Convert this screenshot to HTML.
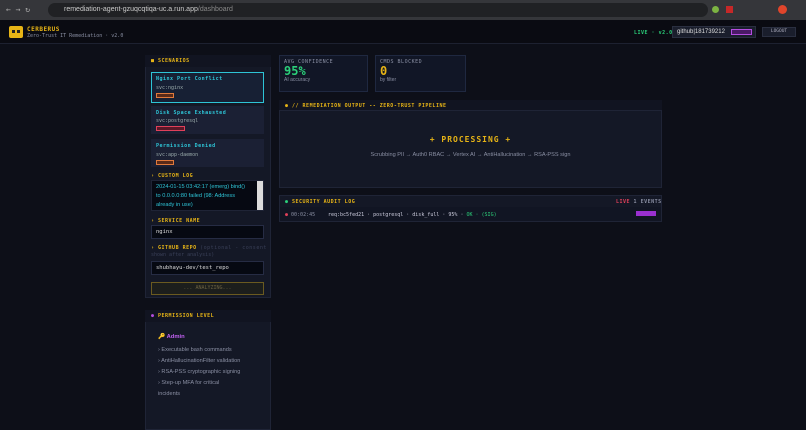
<!DOCTYPE html>
<html><head><meta charset="utf-8"><style>
*{margin:0;padding:0;box-sizing:border-box}
body{width:806px;height:423px;overflow:hidden;background:#0d0f18;font-family:"DejaVu Sans Mono","Liberation Mono",monospace;color:#cfd3e0;position:relative}
.a{position:absolute}
.s{font-family:"Liberation Sans",sans-serif}
.chrome{left:0;top:0;width:806px;height:20px;background:#35363a}
.url{left:48px;top:3px;width:660px;height:14px;border-radius:7px;background:#202124;color:#ccc;font:7px "Liberation Sans",sans-serif;line-height:14px;padding-left:16px}
.hdr{left:0;top:20px;width:806px;height:24px;background:#0a0b12;border-bottom:1px solid #1d2130}
.panel{background:#141826;border:1px solid #1f2436}
.t{font-size:5px;letter-spacing:.5px;font-weight:bold}
.card{border:1px solid #1f2840;background:#111626;padding:3px 4px}
</style></head><body>
<div class="a chrome"></div>
<div class="a" style="left:6px;top:5px;color:#aaa;font-size:8px">← → ↻</div>
<div class="a url">remediation-agent-gzuqcqtiqa-uc.a.run.app<span style="color:#888">/dashboard</span></div>
<div class="a" style="left:712px;top:6px;width:7px;height:7px;border-radius:50%;background:#7cb342"></div>
<div class="a" style="left:726px;top:6px;width:7px;height:7px;background:#c62828"></div>
<div class="a" style="left:778px;top:5px;width:9px;height:9px;border-radius:50%;background:#e0452b"></div>
<div class="a hdr"></div>
<div class="a" style="left:9px;top:26px;width:14px;height:12px;background:#e7b416;border-radius:2px"><div style="margin:4px 3px;width:8px;height:3px;border-left:3px solid #222;border-right:3px solid #222"></div></div>
<div class="a t" style="left:27px;top:26px;color:#e7b416;font-size:6px">CERBERUS</div>
<div class="a" style="left:27px;top:33px;color:#8a8fa3;font-size:5px">Zero-Trust IT Remediation · v2.0</div>
<div class="a t" style="left:634px;top:30px;color:#2bd07a">LIVE · v2.0</div>
<div class="a s" style="left:672px;top:26px;width:84px;height:12px;background:#1a1e2c;border:1px solid #2a2f40;font-size:6px;color:#ddd;padding:2px 4px">github|181739212</div>
<div class="a" style="left:731px;top:29px;width:21px;height:6px;border:1px solid #b44de0;background:#4a1a66"></div>
<div class="a" style="left:762px;top:27px;width:34px;height:10px;background:#1a1e2c;border:1px solid #2a2f40;font-size:4.5px;color:#aab;text-align:center;line-height:8px">LOGOUT</div>

<div class="a panel" style="left:145px;top:55px;width:126px;height:243px"></div>
<div class="a" style="left:145px;top:55px;width:126px;height:12px;background:#111421"></div>
<div class="a t" style="left:151px;top:58px;color:#e7b416">■ SCENARIOS</div>
<div class="a" style="left:151px;top:72px;width:113px;height:31px;border:1px solid #2ec4d6;background:#172034"></div>
<div class="a t" style="left:156px;top:76px;color:#2ec4d6">Nginx Port Conflict</div>
<div class="a" style="left:156px;top:85px;font-size:5px;color:#9aa">svc:nginx</div>
<div class="a" style="left:156px;top:93px;width:18px;height:5px;border:1px solid #e07a3c;background:#5a2a18"></div>
<div class="a" style="left:151px;top:106px;width:113px;height:28px;background:#1b2034"></div>
<div class="a t" style="left:156px;top:110px;color:#2ec4d6">Disk Space Exhausted</div>
<div class="a" style="left:156px;top:118px;font-size:5px;color:#9aa">svc:postgresql</div>
<div class="a" style="left:156px;top:126px;width:29px;height:5px;border:1px solid #e0405a;background:#5a1828"></div>
<div class="a" style="left:151px;top:139px;width:113px;height:28px;background:#1b2034"></div>
<div class="a t" style="left:156px;top:143px;color:#2ec4d6">Permission Denied</div>
<div class="a" style="left:156px;top:152px;font-size:5px;color:#9aa">svc:app-daemon</div>
<div class="a" style="left:156px;top:160px;width:18px;height:5px;border:1px solid #e07a3c;background:#5a2a18"></div>
<div class="a t" style="left:151px;top:173px;color:#e7b416">› CUSTOM LOG</div>
<div class="a s" style="left:151px;top:180px;width:113px;height:31px;background:#060912;border:1px solid #1f2436;font-size:5.6px;color:#2ec4d6;padding:2px 10px 0 4px;line-height:9px;white-space:nowrap">2024-01-15 03:42:17 (emerg) bind()<br>to 0.0.0.0:80 failed (98: Address<br>already in use)</div>
<div class="a" style="left:257px;top:181px;width:6px;height:29px;background:#ddd"></div>
<div class="a t" style="left:151px;top:218px;color:#e7b416">› SERVICE NAME</div>
<div class="a" style="left:151px;top:225px;width:113px;height:14px;background:#060912;border:1px solid #262c44;font-size:5.5px;color:#ddd;padding:3px 4px">nginx</div>
<div class="a t" style="left:151px;top:245px;color:#e7b416">› GITHUB REPO <span style="color:#3a4058;font-weight:normal">(optional - consent</span></div>
<div class="a" style="left:151px;top:252px;font-size:5px;color:#3a4058">shown after analysis)</div>
<div class="a" style="left:151px;top:261px;width:113px;height:14px;background:#060912;border:1px solid #262c44;font-size:5.5px;color:#ddd;padding:3px 4px">shubhayu-dev/test_repo</div>
<div class="a" style="left:151px;top:282px;width:113px;height:13px;background:#1c1e1c;border:1px solid #6a5a20;font-size:5px;color:#6a6040;text-align:center;line-height:11px">... ANALYZING...</div>

<div class="a panel" style="left:145px;top:310px;width:126px;height:120px"></div>
<div class="a" style="left:145px;top:310px;width:126px;height:12px;background:#111421"></div>
<div class="a t" style="left:151px;top:313px;color:#e7b416"><span style="color:#b44de0">●</span> PERMISSION LEVEL</div>
<div class="a s" style="left:158px;top:334px;font-size:5.8px;color:#c060f0;font-weight:bold"><span style="color:#e7b416">🔑</span> Admin</div>
<div class="a s" style="left:158px;top:345px;font-size:5.6px;color:#8a8fa3;line-height:11px;white-space:nowrap">› Executable bash commands<br>› AntiHallucinationFilter validation<br>› RSA-PSS cryptographic signing<br>› Step-up MFA for critical<br>incidents</div>

<div class="a card" style="left:279px;top:55px;width:89px;height:37px"><div class="t" style="color:#8a8fa3;font-weight:normal">AVG CONFIDENCE</div><div style="color:#2bd07a;font-size:12px;font-weight:bold;line-height:12px">95%</div><div class="s" style="font-size:5px;color:#8a8fa3">AI accuracy</div></div>
<div class="a card" style="left:375px;top:55px;width:91px;height:37px"><div class="t" style="color:#8a8fa3;font-weight:normal">CMDS BLOCKED</div><div style="color:#e7b416;font-size:12px;font-weight:bold;line-height:12px">0</div><div class="s" style="font-size:5px;color:#8a8fa3">by filter</div></div>

<div class="a panel" style="left:279px;top:100px;width:383px;height:88px"></div>
<div class="a" style="left:279px;top:100px;width:383px;height:11px;background:#111421;border-bottom:1px solid #1f2436"></div>
<div class="a t" style="left:285px;top:103px;color:#e7b416">● // REMEDIATION OUTPUT -- ZERO-TRUST PIPELINE</div>
<div class="a" style="left:279px;top:135px;width:383px;text-align:center;color:#e7b416;font-size:8px;font-weight:bold;letter-spacing:1px">+ PROCESSING +</div>
<div class="a s" style="left:279px;top:152px;width:383px;text-align:center;color:#8a8fa3;font-size:5.6px">Scrubbing PII → Auth0 RBAC → Vertex AI → AntiHallucination → RSA-PSS sign</div>

<div class="a panel" style="left:279px;top:195px;width:383px;height:27px"></div>
<div class="a" style="left:280px;top:207px;width:381px;height:14px;background:#111523"></div>
<div class="a t" style="left:285px;top:199px;color:#e7b416"><span style="color:#2bd07a">●</span> SECURITY AUDIT LOG</div>
<div class="a t" style="left:616px;top:199px;color:#8a8fa3"><span style="color:#e0405a">LIVE</span> 1 EVENTS</div>
<div class="a" style="left:285px;top:212px;font-size:5px;color:#8a8fa3"><span style="color:#e0405a">●</span> 00:02:45</div>
<div class="a" style="left:328px;top:212px;font-size:5px;color:#ccd">req:bc5fed21 · postgresql · disk_full · 95% · <span style="color:#2bd07a">OK · (SIG)</span></div>
<div class="a" style="left:636px;top:211px;width:20px;height:5px;background:#9a30d0"></div>
</body></html>
